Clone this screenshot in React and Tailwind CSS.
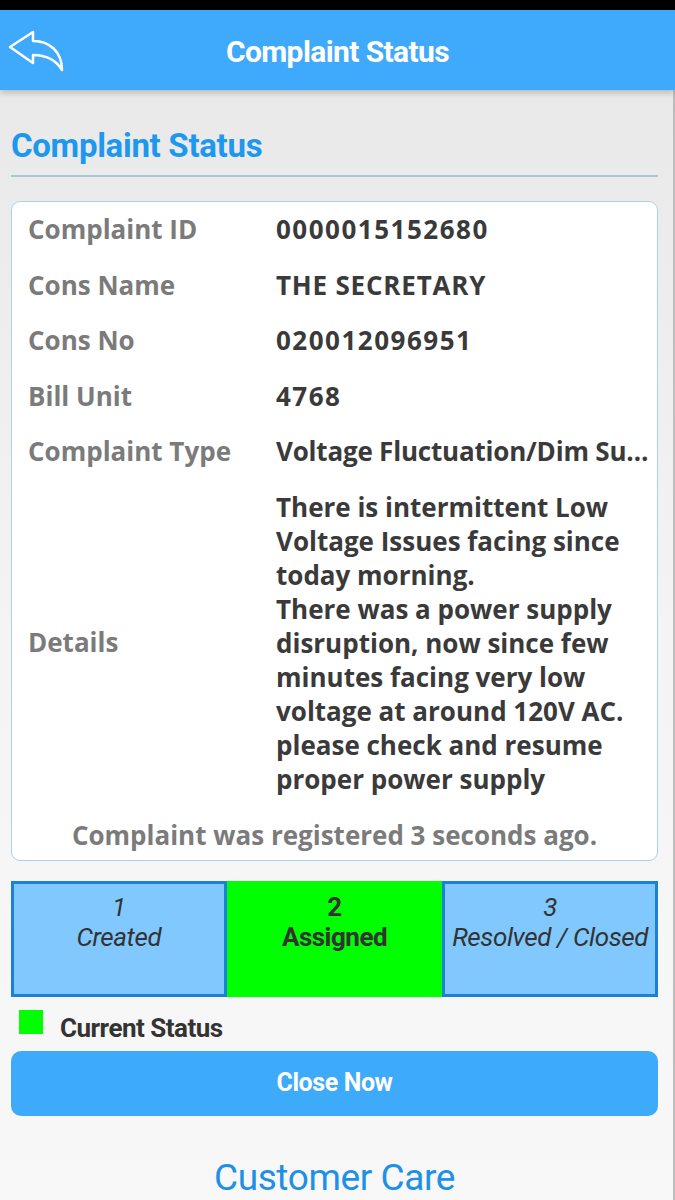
const rows = [
  ["Complaint ID", "0000015152680", "tracking-[1.5px]"],
  ["Cons Name", "THE SECRETARY", "tracking-[0.8px]"],
  ["Cons No", "020012096951", "tracking-[1.5px]"],
  ["Bill Unit", "4768", "tracking-[1.5px]"],
  ["Complaint Type", "Voltage Fluctuation/Dim Supply", "tracking-[-0.2px]"],
];

const steps = [
  { n: "1", label: "Created" },
  { n: "2", label: "Assigned", current: true },
  { n: "3", label: "Resolved / Closed" },
];

function BackIcon() {
  return (
    <svg
      className="absolute left-0 top-[10px]"
      width="80"
      height="70"
      viewBox="0 0 80 70"
      fill="none"
      stroke="white"
      strokeWidth="2.5"
      strokeLinejoin="round"
      strokeLinecap="round"
    >
      <path d="M10 27 L33 12 L33 21 C50 21 62 32 62 50 C56 40 46 35 33 35 L33 43 Z" />
    </svg>
  );
}

export default function App() {
  return (
    <div className="w-[675px] h-[1200px] overflow-hidden flex flex-col bg-[#f7f7f7] font-['Roboto',sans-serif]">
      <div className="h-[10px] bg-black shrink-0" />
      <div className="relative h-[80px] shrink-0 bg-[#3fa9fb] flex items-center justify-center shadow-[0_3px_6px_rgba(0,0,0,0.2)] z-10">
        <BackIcon />
        <span className="text-white font-bold text-[30px] tracking-[-0.6px] mt-[2px]">
          Complaint Status
        </span>
      </div>

      <div className="flex-1 border-r-2 border-[#bdbdbd] bg-gradient-to-b from-[#e9e9e9] via-[#f4f4f4] to-[#f8f8f8] pl-[11px] pr-[15px] pt-[36px]">
        <h2 className="text-[#1d98ee] font-bold text-[33px] leading-[40px] tracking-[-0.3px]">
          Complaint Status
        </h2>
        <div className="mt-[9px] h-[2px] bg-[#a9c9d1]" />

        <div className="mt-[24px] bg-white border border-[#a8d3ea] rounded-[9px] pl-[16px] pr-[2px] font-['Open_Sans',sans-serif] font-bold">
          {rows.map(([k, v, tr]) => (
            <div key={k} className="flex items-center h-[55.5px] text-[26px]">
              <div className="w-[248px] shrink-0 text-[#7b7b7b]">{k}</div>
              <div className={`flex-1 min-w-0 truncate text-[#3a3a3a] ${tr}`}>
                {v}
              </div>
            </div>
          ))}
          <div className="flex items-center py-[10px] text-[26px]">
            <div className="w-[248px] shrink-0 text-[#7b7b7b]">Details</div>
            <div className="flex-1 text-[#3a3a3a] leading-[34px]">
              There is intermittent Low Voltage Issues facing since today
              morning.
              <br />
              There was a power supply disruption, now since few minutes facing
              very low voltage at around 120V AC. please check and resume proper
              power supply
            </div>
          </div>
          <div className="pt-[12px] pb-[8px] text-center text-[#7b7b7b] text-[26px] leading-[34px] ml-[-16px] mr-[-2px]">
            Complaint was registered 3 seconds ago.
          </div>
        </div>

        <div className="mt-[20px] grid grid-cols-3 h-[116px] text-[#333]">
          {steps.map((s) =>
            s.current ? (
              <div
                key={s.n}
                className="bg-[#00ff00] flex flex-col items-center pt-[11px] font-bold text-[26px] leading-[30px] tracking-[-0.5px]"
              >
                <span>{s.n}</span>
                <span>{s.label}</span>
              </div>
            ) : (
              <div
                key={s.n}
                className="bg-[#80c8fd] border-[3px] border-[#1a80d8] flex flex-col items-center pt-[8px] italic text-[26px] leading-[30px] tracking-[-0.4px] whitespace-nowrap"
              >
                <span>{s.n}</span>
                <span>{s.label}</span>
              </div>
            )
          )}
        </div>

        <div className="mt-[13px] flex items-start pl-[8px]">
          <div className="w-[24px] h-[24px] bg-[#00ff00]" />
          <span className="ml-[17px] mt-[3px] font-bold text-[26px] leading-[30px] tracking-[-0.5px] text-[#333]">
            Current Status
          </span>
        </div>

        <button className="mt-[8px] w-full h-[65px] rounded-[10px] bg-[#3eaafa] text-white font-bold text-[25px] tracking-[-0.4px]">
          Close Now
        </button>

        <div className="mt-[40px] text-center text-[#1e90e6] text-[37px] leading-[44px] tracking-[-0.4px]">
          Customer Care
        </div>
      </div>
    </div>
  );
}
